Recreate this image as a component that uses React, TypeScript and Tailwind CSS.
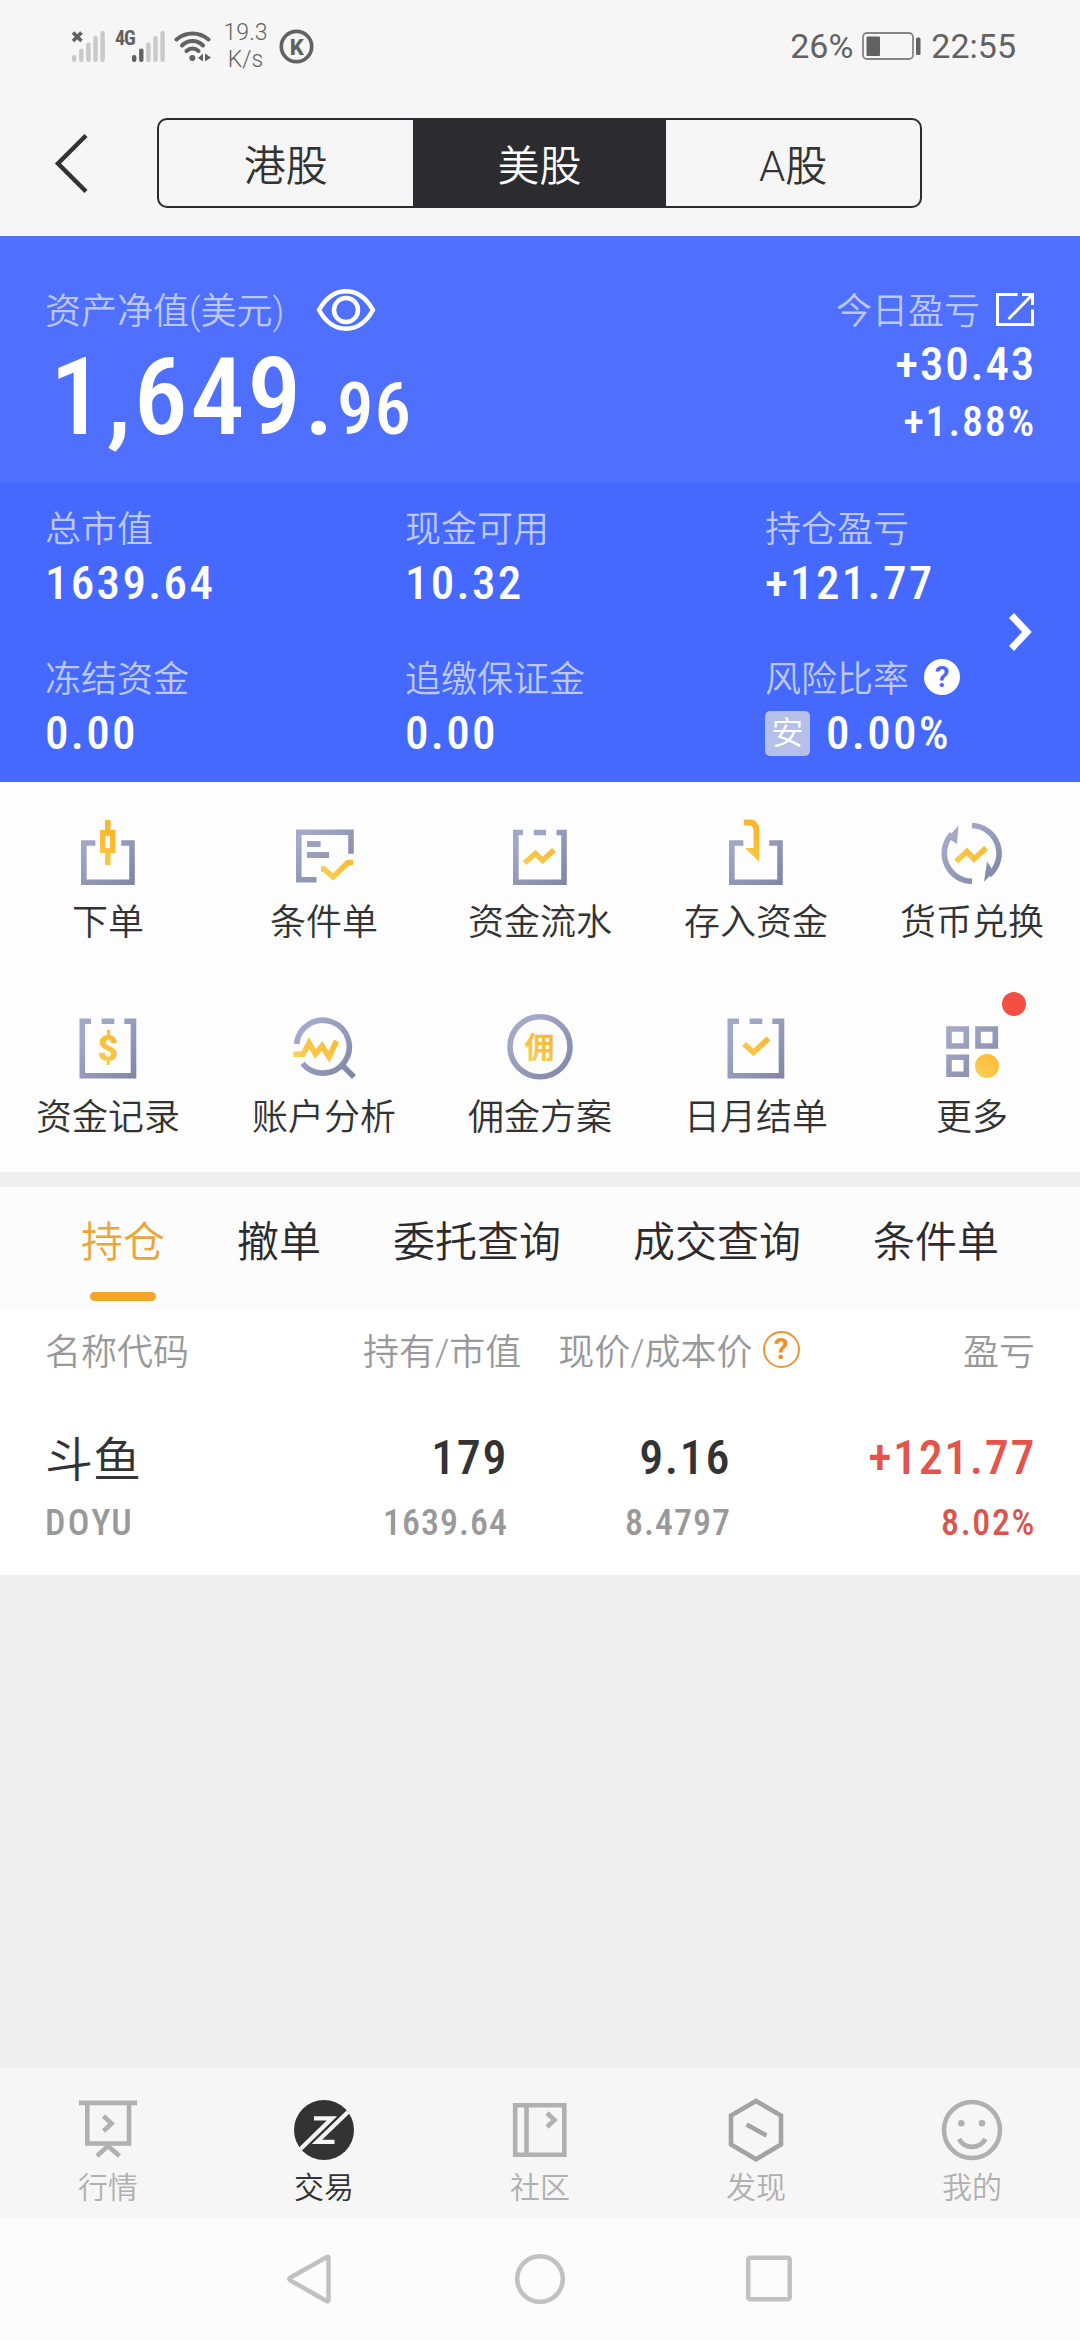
import { ReactNode, useState } from "react";
import clsx from "clsx";

const markets = ["港股", "美股", "A股"];
const tabs = ["持仓", "撤单", "委托查询", "成交查询", "条件单"];

function SignalBars({ active = 0 }: { active?: number }) {
  const tops = [54, 47.5, 41.5, 35, 30];
  return (
    <svg width="33" height="31" viewBox="0 30 33 31">
      {tops.map((top, i) => (
        <rect
          key={top}
          x={i * 7.1}
          y={top}
          width="4.4"
          height={61 - top}
          rx="2"
          fill={i < active ? "#626262" : "#c9c9c9"}
        />
      ))}
    </svg>
  );
}

function StatusBar() {
  return (
    <div className="flex h-[92px] items-center pl-[71px] pr-[64px] text-[#626262]">
      <div className="relative flex w-[34px] justify-end">
        <SignalBars />
        <svg className="absolute left-0 top-0" width="12" height="12" viewBox="0 0 12 12">
          <path d="M2 1.5L10.5 10M10.5 1.5L2 10" stroke="#626262" strokeWidth="3.6" />
        </svg>
      </div>
      <div className="relative ml-[10px] flex w-[50px] justify-end">
        <span className="absolute left-0 -top-[5px] text-[20px] font-bold leading-[24px] tracking-[-1px] [font-stretch:75%]">4G</span>
        <SignalBars active={2} />
      </div>
      <svg className="ml-[9px]" width="38" height="31" viewBox="0 0 38 31" fill="none" stroke="#626262" strokeWidth="4" strokeLinecap="round">
        <path d="M2.5 8.5C12 .5 25 .5 34.5 8.5" />
        <path d="M8 14.5C14 8.5 23 8.5 29 14.5" />
        <path d="M12.5 20C16 16.5 21 16.5 24.5 20" />
        <circle cx="18.3" cy="27" r="3" fill="#626262" stroke="none" />
        <path d="M24 27l5-4.5v8zM31 22.5l6 4-6 4z" fill="#626262" stroke="none" />
      </svg>
      <div className="ml-[10px] w-[47px] text-center text-[23px] font-[350] leading-[27px]">
        19.3
        <br />
        K/s
      </div>
      <svg className="ml-[10px]" width="35" height="35" viewBox="0 0 35 35">
        <circle cx="17.5" cy="17.5" r="15.2" fill="none" stroke="#626262" strokeWidth="3.7" />
        <text x="17.8" y="25.5" fontSize="22" fontWeight="800" fill="#626262" textAnchor="middle">
          K
        </text>
      </svg>
      <div className="ml-auto flex items-center text-[34px] font-normal">
        <span>26%</span>
        <svg className="mx-[9px]" width="60" height="30" viewBox="0 0 60 30">
          <rect x="1" y="2" width="50" height="26" rx="4" fill="none" stroke="#858585" strokeWidth="1.8" />
          <rect x="4.5" y="5.5" width="13.5" height="19.5" rx="1" fill="#626262" />
          <rect x="54" y="6.5" width="4.5" height="17.5" rx="1.5" fill="#626262" />
        </svg>
        <span>22:55</span>
      </div>
    </div>
  );
}

function Header() {
  const [market, setMarket] = useState("美股");
  return (
    <div className="flex h-[144px] items-start pt-[26px]">
      <svg className="ml-[52px] mt-[14px]" width="40" height="64" viewBox="0 0 40 64" fill="none" stroke="#333" strokeWidth="4.5">
        <path d="M34 3.5L6 31.5L34 59.5" />
      </svg>
      <div className="ml-[65px] flex h-[90px] w-[765px] overflow-hidden rounded-[10px] border-2 border-[#2b2b30]">
        {markets.map((name) => (
          <button
            key={name}
            onClick={() => setMarket(name)}
            className={clsx(
              "flex-1 pt-[7px] text-[42px]",
              name === market ? "bg-[#2b2b30] text-white" : "text-[#333]"
            )}
          >
            {name}
          </button>
        ))}
      </div>
    </div>
  );
}

function Stat({ label, value, hint, badge }: { label: string; value: string; hint?: boolean; badge?: string }) {
  return (
    <div>
      <div className="flex h-[48px] items-center pt-[4px] text-[36px] text-[#bcc8fb]">
        {label}
        {hint && (
          <span className="mb-[6px] ml-[15px] flex size-[36px] items-center justify-center rounded-full bg-white text-[30px] font-semibold text-[#4569ff]">
            ?
          </span>
        )}
      </div>
      <div className="flex h-[62px] items-center pt-[1px] text-[47px] font-medium tracking-[2.3px] text-white [font-stretch:75%]">
        {badge && (
          <span className="mr-[16px] flex size-[45px] items-center justify-center rounded-[5px] bg-[#b5bfe8] text-[32px] font-[350] tracking-normal">
            {badge}
          </span>
        )}
        {value}
      </div>
    </div>
  );
}

function Assets() {
  return (
    <>
      <div className="flex h-[246px] justify-between bg-[#4f70ff] px-[45px] pt-[50px] text-white">
        <div>
          <div className="flex h-[48px] items-center text-[36px] text-[#bcc8fb]">
            <span className="pt-[3px]">资产净值(美元)</span>
            <svg className="ml-[32px]" width="60" height="44" viewBox="0 0 60 44" fill="none" stroke="white" strokeWidth="4.5">
              <path d="M3 22C17-3 43-3 57 22C43 47 17 47 3 22Z" strokeLinejoin="round" />
              <circle cx="30" cy="22" r="12" />
            </svg>
          </div>
          <div className="flex h-[126px] items-baseline pl-[5px] font-medium leading-[127px] [font-stretch:75%]">
            <span className="text-[108px] tracking-[2.8px]">1,649.</span>
            <span className="text-[73px] tracking-[1px]">96</span>
          </div>
        </div>
        <div className="text-right font-medium [font-stretch:75%]">
          <div className="flex h-[48px] items-center justify-end text-[36px] font-[350] text-[#bcc8fb]">
            <span className="pt-[3px]">今日盈亏</span>
            <svg className="ml-[15px]" width="40" height="36" viewBox="0 0 40 36" fill="none" stroke="white" strokeWidth="3">
              <path d="M22.5 2.5H2.5V32.5H37.5V17.5" />
              <path d="M27 2.5H37.5V13M37 3L13.5 27" />
            </svg>
          </div>
          <div className="-mr-[1px] h-[60px] text-[47px] leading-[60px] tracking-[1.8px]">+30.43</div>
          <div className="-mr-[1px] h-[55px] text-[42px] leading-[55px] tracking-[1.8px]">+1.88%</div>
        </div>
      </div>
      <div className="flex h-[300px] items-center bg-[#4569ff] pl-[45px]">
        <div className="grid grid-cols-[360px_360px_240px] gap-y-[40px] pt-[3px]">
          <Stat label="总市值" value="1639.64" />
          <Stat label="现金可用" value="10.32" />
          <Stat label="持仓盈亏" value="+121.77" />
          <Stat label="冻结资金" value="0.00" />
          <Stat label="追缴保证金" value="0.00" />
          <Stat label="风险比率" value="0.00%" hint badge="安" />
        </div>
        <svg width="32" height="40" viewBox="0 0 32 40" fill="none" stroke="white" strokeWidth="7">
          <path d="M6.5 3.5L22 20L6.5 36.5" />
        </svg>
      </div>
    </>
  );
}

const gray = "url(#gray)";
const gold = "url(#gold)";

const actions: { label: string; dot?: boolean; icon: ReactNode }[] = [
  {
    label: "下单",
    icon: (
      <>
        <path d="M23.4 27H11.8V66.3H60V27H49.2" />
        <path d="M28 14H33V4H38.5V14H43.5V37H38.5V49H33V37H28ZM33.5 20V32H38V20Z" fill={gold} fillRule="evenodd" stroke="none" />
      </>
    ),
  },
  {
    label: "条件单",
    icon: (
      <>
        <path d="M28.5 63.7H10.8V16.3H63V37.7" />
        <path d="M19 25h13.6v6H19zM19 36h22v6H19z" fill={gray} stroke="none" />
        <path d="M33 53h3l9 8 15-14.5h5" stroke={gold} />
      </>
    ),
  },
  {
    label: "资金流水",
    icon: (
      <>
        <path d="M19 16.5H11.8V66.3H60V16.5H52.5M29.7 16.5H42" />
        <path d="M20.5 47L31.5 37.5L38.5 44.5L50 34" stroke={gold} />
      </>
    ),
  },
  {
    label: "存入资金",
    icon: (
      <>
        <path d="M23.4 27H11.8V66.3H60V27H49.2" />
        <path d="M24 3.5H30Q39.3 4 39.3 14V46L25 32H33.5V15Q33.5 9.5 29 9.5H24Z" fill={gold} stroke="none" />
      </>
    ),
  },
  {
    label: "货币兑换",
    icon: (
      <>
        <path d="M36 9.5A28 28 0 0 1 53 59M36 65.3A28 28 0 0 1 16 18" />
        <path d="M48 66L51 45.5L56 53L63 50ZM22.5 9.5L21 28L15 24L9 25Z" fill={gray} stroke="none" />
        <path d="M20 45.5L31 35.5L38 43L50 32" stroke={gold} />
      </>
    ),
  },
  {
    label: "资金记录",
    icon: (
      <>
        <path d="M19 10.2H10.3V64.8H61.5V10.2H52.3M29.6 10.2H42.3" />
        <text x="36" y="50" fontSize="36" fontWeight="900" textAnchor="middle" fill={gold} stroke="none">
          $
        </text>
      </>
    ),
  },
  {
    label: "账户分析",
    icon: (
      <>
        <path d="M8.6 33A26.4 26.4 0 1 1 14.5 52.5M55 55L66 66" />
        <path d="M5.4 43.3H15L21 32L27.5 43L34 35L41 46L48.5 30" stroke={gold} />
      </>
    ),
  },
  {
    label: "佣金方案",
    icon: (
      <>
        <circle cx="36" cy="35.7" r="30" />
        <text x="35.5" y="47" fontSize="30" fontWeight="700" textAnchor="middle" fill={gold} stroke="none">
          佣
        </text>
      </>
    ),
  },
  {
    label: "日月结单",
    icon: (
      <>
        <path d="M19 10.2H10.3V64.8H61.5V10.2H52.3M29.6 10.2H42.3" />
        <path d="M24 33L33.5 41.5L48.5 27.5" stroke={gold} />
      </>
    ),
  },
  {
    label: "更多",
    dot: true,
    icon: (
      <>
        <path d="M13 18H30.3V35H13ZM42 18H59.3V35H42ZM13 46.2H30.3V63.2H13Z" />
        <circle cx="51" cy="55" r="12" fill={gold} stroke="none" />
      </>
    ),
  },
];

function Actions() {
  return (
    <div className="grid grid-cols-5 bg-[#fdfdfd]">
      {actions.map(({ label, dot, icon }) => (
        <div key={label} className="flex h-[195px] flex-col items-center pt-[34px]">
          <div className="relative">
            <svg width="72" height="72" viewBox="0 0 72 72" fill="none" stroke={gray} strokeWidth="5.6">
              <defs>
                <linearGradient id="gray" gradientUnits="userSpaceOnUse" x1="8" y1="8" x2="64" y2="68">
                  <stop offset="0.2" stopColor="#a3a8c7" />
                  <stop offset="1" stopColor="#8085a5" />
                </linearGradient>
                <linearGradient id="gold" gradientUnits="userSpaceOnUse" x1="22" y1="52" x2="46" y2="22">
                  <stop offset="0" stopColor="#f8cf55" />
                  <stop offset="1" stopColor="#fab62f" />
                </linearGradient>
              </defs>
              {icon}
            </svg>
            {dot && <span className="absolute -top-[19px] left-[66px] size-[24px] rounded-full bg-[#f24f45]" />}
          </div>
          <div className="mt-[10px] text-[36px] leading-[50px] text-[#333]">{label}</div>
        </div>
      ))}
    </div>
  );
}

function Holdings() {
  const [tab, setTab] = useState("持仓");
  return (
    <div className="mt-[15px] bg-white">
      <div className="flex h-[123px] justify-between bg-[#fcfcfc] px-[81px]">
        {tabs.map((name) => (
          <button
            key={name}
            onClick={() => setTab(name)}
            className={clsx(
              "flex flex-col items-center pt-[6px] text-[42px] leading-[99px]",
              name === tab ? "text-[#eba63a]" : "text-[#2b2b30]"
            )}
          >
            {name}
            {name === tab && <span className="h-[9px] w-[66px] rounded-full bg-[#f3a72a]" />}
          </button>
        ))}
      </div>
      <div className="flex h-[83px] items-center pl-[45px] pr-[45px] pt-[2px] text-[36px] text-[#999]">
        <div className="w-[318px]">名称代码</div>
        <div>持有/市值</div>
        <div className="ml-[37px]">现价/成本价</div>
        <span className="mb-[6px] ml-[10px] flex size-[37px] items-center justify-center rounded-full border-2 border-[#ee9433] text-[29px] font-bold text-[#ee8f22]">
          ?
        </span>
        <div className="ml-auto">盈亏</div>
      </div>
      <div className="grid h-[182px] grid-cols-[230px_233px_223px_305px] content-start pl-[45px] pt-[31px] text-right font-medium [font-stretch:75%]">
        <div className="h-[68px] text-left text-[48px] font-[350] leading-[73px] text-[#333]">斗鱼</div>
        <div className="text-[48px] leading-[68px] tracking-[1.6px] text-[#333]">179</div>
        <div className="text-[48px] leading-[68px] tracking-[1.6px] text-[#333]">9.16</div>
        <div className="text-[48px] leading-[68px] tracking-[1.6px] text-[#e5544b]">+121.77</div>
        <div className="text-left text-[36px] leading-[62px] tracking-[2.4px] text-[#999]">DOYU</div>
        <div className="text-[36px] leading-[62px] tracking-[1px] text-[#999]">1639.64</div>
        <div className="text-[36px] leading-[62px] tracking-[1px] text-[#999]">8.4797</div>
        <div className="text-[36px] leading-[62px] tracking-[1.6px] text-[#d9564e]">8.02%</div>
      </div>
    </div>
  );
}

const navItems: { label: string; icon: ReactNode }[] = [
  {
    label: "行情",
    icon: <path d="M7 8.9H65M15.3 9V49.5H57V9M25 62L36 52L47.5 62M31.5 22L39.5 29.5L31.5 37" />,
  },
  {
    label: "交易",
    icon: (
      <>
        <circle cx="36" cy="36" r="30" fill="#333" stroke="none" />
        <path d="M26 24.3H44L12.5 55M46.5 47.8H29L60 18" stroke="#f6f6f6" strokeWidth="4.2" />
      </>
    ),
  },
  {
    label: "社区",
    icon: <path d="M11.2 11.2H60.3V60.8H11.2ZM22.5 11V61M43 19L50.5 26L43 33" />,
  },
  {
    label: "发现",
    icon: <path d="M36 7L61 21.5V50.5L36 65.3L11 50.5V21.5ZM26.5 30.5L46.5 41.5" stroke="#a2a4a3" />,
  },
  {
    label: "我的",
    icon: (
      <>
        <circle cx="36" cy="36" r="28" />
        <circle cx="25.3" cy="29.3" r="3.3" fill="#b0b0b0" stroke="none" />
        <circle cx="46" cy="29.3" r="3.3" fill="#b0b0b0" stroke="none" />
        <path d="M23 45C29 55.5 43 55.5 49.5 45" />
      </>
    ),
  },
];

function BottomNav() {
  return (
    <div className="grid h-[150px] grid-cols-5 bg-[#f6f6f6]">
      {navItems.map(({ label, icon }) => (
        <div
          key={label}
          className={clsx("flex flex-col items-center pt-[26px]", label === "交易" ? "text-[#333]" : "text-[#b0b0b0]")}
        >
          <svg width="72" height="72" viewBox="0 0 72 72" fill="none" stroke="#b0b0b0" strokeWidth="4.6">
            {icon}
          </svg>
          <div className="mt-[1px] text-[30px] leading-[42px]">{label}</div>
        </div>
      ))}
    </div>
  );
}

function SystemNav() {
  return (
    <div className="flex h-[122px] items-center justify-center bg-[#fcfcfc]">
      <svg width="510" height="54" viewBox="0 0 510 54" fill="none" stroke="#c1c1c1" strokeWidth="4.5" strokeLinejoin="round">
        <path d="M42 5Q43.5 4 43.5 6V48Q43.5 50 41.5 49L5.5 28.5Q3 27 5.5 25.5Z" />
        <circle cx="255" cy="27" r="22.8" />
        <rect x="463.2" y="5.8" width="41.5" height="41.5" rx="2" />
      </svg>
    </div>
  );
}

export default function App() {
  return (
    <div className="flex h-[2340px] w-[1080px] flex-col overflow-hidden bg-[#efefef] font-['Roboto','Noto_Sans_CJK_SC',sans-serif] font-[350]">
      <div className="bg-[#f6f6f6]">
        <StatusBar />
        <Header />
      </div>
      <Assets />
      <Actions />
      <Holdings />
      <div className="mt-auto">
        <BottomNav />
        <SystemNav />
      </div>
    </div>
  );
}
